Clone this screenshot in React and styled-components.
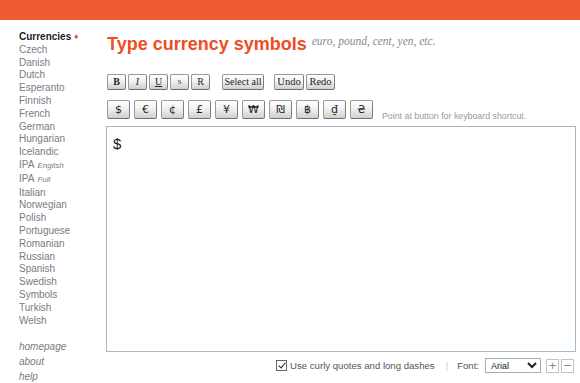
import styled, { createGlobalStyle } from "styled-components";

const GlobalStyle = createGlobalStyle`
   html, body {
      margin: 0;
      padding: 0;
      background: #fff;
      font-family: "Liberation Sans", Arial, sans-serif;
   }
`;

const TopBar = styled.div`
   height: 20px;
   background: #f05a35;
`;

const Page = styled.div`
   display: flex;
   align-items: flex-start;
`;

const Sidebar = styled.nav`
   width: 88px;
   padding: 11px 0 0 19px;
   font-size: 10px;
   line-height: 12.8px;
`;

const LangLink = styled.div`
   color: ${(p) => (p.$active ? "#1e1e1e" : "#7c7984")};
   font-weight: ${(p) => (p.$active ? "bold" : "normal")};
   white-space: nowrap;
`;

const Marker = styled.span`
   color: #e8452c;
   font-size: 8px;
   margin-left: 3px;
   vertical-align: 1px;
`;

const Sub = styled.span`
   font-size: 8px;
   font-style: italic;
   margin-left: 3px;
`;

const ExtraLinks = styled.div`
   margin-top: 12px;
   font-style: italic;
   line-height: 15px;
   color: #7c7984;
`;

const Main = styled.main`
   width: 469px;
   padding-top: 14px;
`;

const TitleRow = styled.div`
   display: flex;
   align-items: baseline;
   gap: 5px;
   height: 21px;
`;

const Title = styled.h1`
   margin: 0;
   font-size: 18px;
   line-height: 21px;
   font-weight: bold;
   color: #f04c25;
`;

const Tagline = styled.span`
   font-family: "Liberation Serif", "Times New Roman", serif;
   font-style: italic;
   font-size: 11.5px;
   color: #8a8a8a;
   position: relative;
   top: -5px;
`;

const ToolRow = styled.div`
   display: flex;
   align-items: flex-end;
   margin-top: ${(p) => p.$top}px;
`;

const Group = styled.div`
   display: flex;
   gap: ${(p) => p.$gap ?? 2}px;
   margin-right: ${(p) => p.$after ?? 0}px;
`;

const Btn = styled.button`
   box-sizing: border-box;
   height: ${(p) => p.$h ?? 16}px;
   width: ${(p) => p.$w}px;
   padding: 0;
   border: 1px solid #9a9a9a;
   border-bottom-color: #6f6f6f;
   border-right-color: #7f7f7f;
   border-radius: 2px;
   background: linear-gradient(#ffffff, #f1f1f1 45%, #cfcfcf);
   color: #222;
   font-family: ${(p) =>
      p.$sans
         ? `"DejaVu Sans", "Liberation Sans", sans-serif`
         : `"Liberation Serif", "Times New Roman", serif`};
   font-size: ${(p) => p.$fs ?? 10}px;
   line-height: 1;
   cursor: pointer;
   display: flex;
   align-items: center;
   justify-content: center;
`;

const Hint = styled.span`
   font-size: 8.8px;
   color: #9a9a9a;
   margin-left: 9px;
   margin-bottom: -2px;
`;

const Editor = styled.textarea`
   display: block;
   box-sizing: border-box;
   width: 470px;
   height: 226px;
   margin-top: 7px;
   margin-left: -1px;
   border: 1px solid #a6b9c9;
   padding: 8px 6px;
   font-family: "Liberation Sans", Arial, sans-serif;
   font-size: 15px;
   color: #111;
   resize: none;
   outline: none;
`;

const Footer = styled.div`
   display: flex;
   justify-content: flex-end;
   align-items: center;
   margin-top: 6px;
   padding-right: 2px;
   font-size: 9.6px;
   color: #555;
`;

const Check = styled.label`
   display: flex;
   align-items: center;
   gap: 3px;
`;

const Box = styled.input`
   appearance: none;
   position: relative;
   box-sizing: border-box;
   width: 11px;
   height: 11px;
   margin: 0;
   border: 1px solid #666;
   background: #fff;

   &:checked::after {
      content: "";
      position: absolute;
      left: 3px;
      top: 0px;
      width: 3px;
      height: 6px;
      border: solid #222;
      border-width: 0 1.5px 1.5px 0;
      transform: rotate(40deg);
   }
`;

const Sep = styled.span`
   color: #ccc;
   margin: 0 9px 0 11px;
`;

const FontSelect = styled.select`
   box-sizing: border-box;
   width: 56px;
   height: 15px;
   margin-left: 6px;
   font-size: 9px;
   font-family: "Liberation Sans", Arial, sans-serif;
   padding: 0 1px;
   border: 1px solid #9bb0c2;
   background: #fff;
   color: #222;
`;

const SizeBtn = styled.button`
   box-sizing: border-box;
   width: 13px;
   height: 14px;
   margin-left: ${(p) => p.$ml}px;
   padding: 0;
   border: 1px solid #b9c6d2;
   background: #fff;
   color: #888;
   font-size: 13px;
   line-height: 11px;
   font-family: "Liberation Sans", Arial, sans-serif;
`;

const languages = [
   "Czech", "Danish", "Dutch", "Esperanto", "Finnish", "French", "German",
   "Hungarian", "Icelandic",
];
const languages2 = [
   "Italian", "Norwegian", "Polish", "Portuguese", "Romanian", "Russian",
   "Spanish", "Swedish", "Symbols", "Turkish", "Welsh",
];

const styleButtons = [
   { label: "B", style: { fontWeight: "bold" } },
   { label: "I", style: { fontStyle: "italic" } },
   { label: "U", style: { textDecoration: "underline" } },
   { label: "S", style: { fontSize: "7px" } },
   { label: "R" },
];

const currencies = ["$", "€", "¢", "£", "¥", "₩", "₪", "฿", "₫", "₴"];

function App() {
   return (
      <>
         <GlobalStyle />
         <TopBar />
         <Page>
            <Sidebar>
               <LangLink $active>
                  Currencies<Marker>♦</Marker>
               </LangLink>
               {languages.map((l) => (
                  <LangLink key={l}>{l}</LangLink>
               ))}
               <LangLink>
                  IPA<Sub>English</Sub>
               </LangLink>
               <LangLink>
                  IPA<Sub>Full</Sub>
               </LangLink>
               {languages2.map((l) => (
                  <LangLink key={l}>{l}</LangLink>
               ))}
               <ExtraLinks>
                  <div>homepage</div>
                  <div>about</div>
                  <div>help</div>
               </ExtraLinks>
            </Sidebar>

            <Main>
               <TitleRow>
                  <Title>Type currency symbols</Title>
                  <Tagline>euro, pound, cent, yen, etc.</Tagline>
               </TitleRow>

               <ToolRow $top={19}>
                  <Group $after={12}>
                     {styleButtons.map((b) => (
                        <Btn key={b.label} $w={19} style={b.style}>
                           {b.label}
                        </Btn>
                     ))}
                  </Group>
                  <Group $after={10}>
                     <Btn $w={42}>Select all</Btn>
                  </Group>
                  <Group>
                     <Btn $w={30} $fs={10.5}>Undo</Btn>
                     <Btn $w={29} $fs={10.5}>Redo</Btn>
                  </Group>
               </ToolRow>

               <ToolRow $top={10}>
                  <Group $gap={4}>
                     {currencies.map((c) => (
                        <Btn key={c} $w={23} $h={19} $sans $fs={11}>
                           {c}
                        </Btn>
                     ))}
                  </Group>
                  <Hint>Point at button for keyboard shortcut.</Hint>
               </ToolRow>

               <Editor defaultValue="$" />

               <Footer>
                  <Check>
                     <Box type="checkbox" defaultChecked />
                     Use curly quotes and long dashes
                  </Check>
                  <Sep>|</Sep>
                  <span>Font:</span>
                  <FontSelect defaultValue="Arial">
                     <option>Arial</option>
                  </FontSelect>
                  <SizeBtn $ml={5}>+</SizeBtn>
                  <SizeBtn $ml={2}>−</SizeBtn>
               </Footer>
            </Main>
         </Page>
      </>
   );
}

export default App;
